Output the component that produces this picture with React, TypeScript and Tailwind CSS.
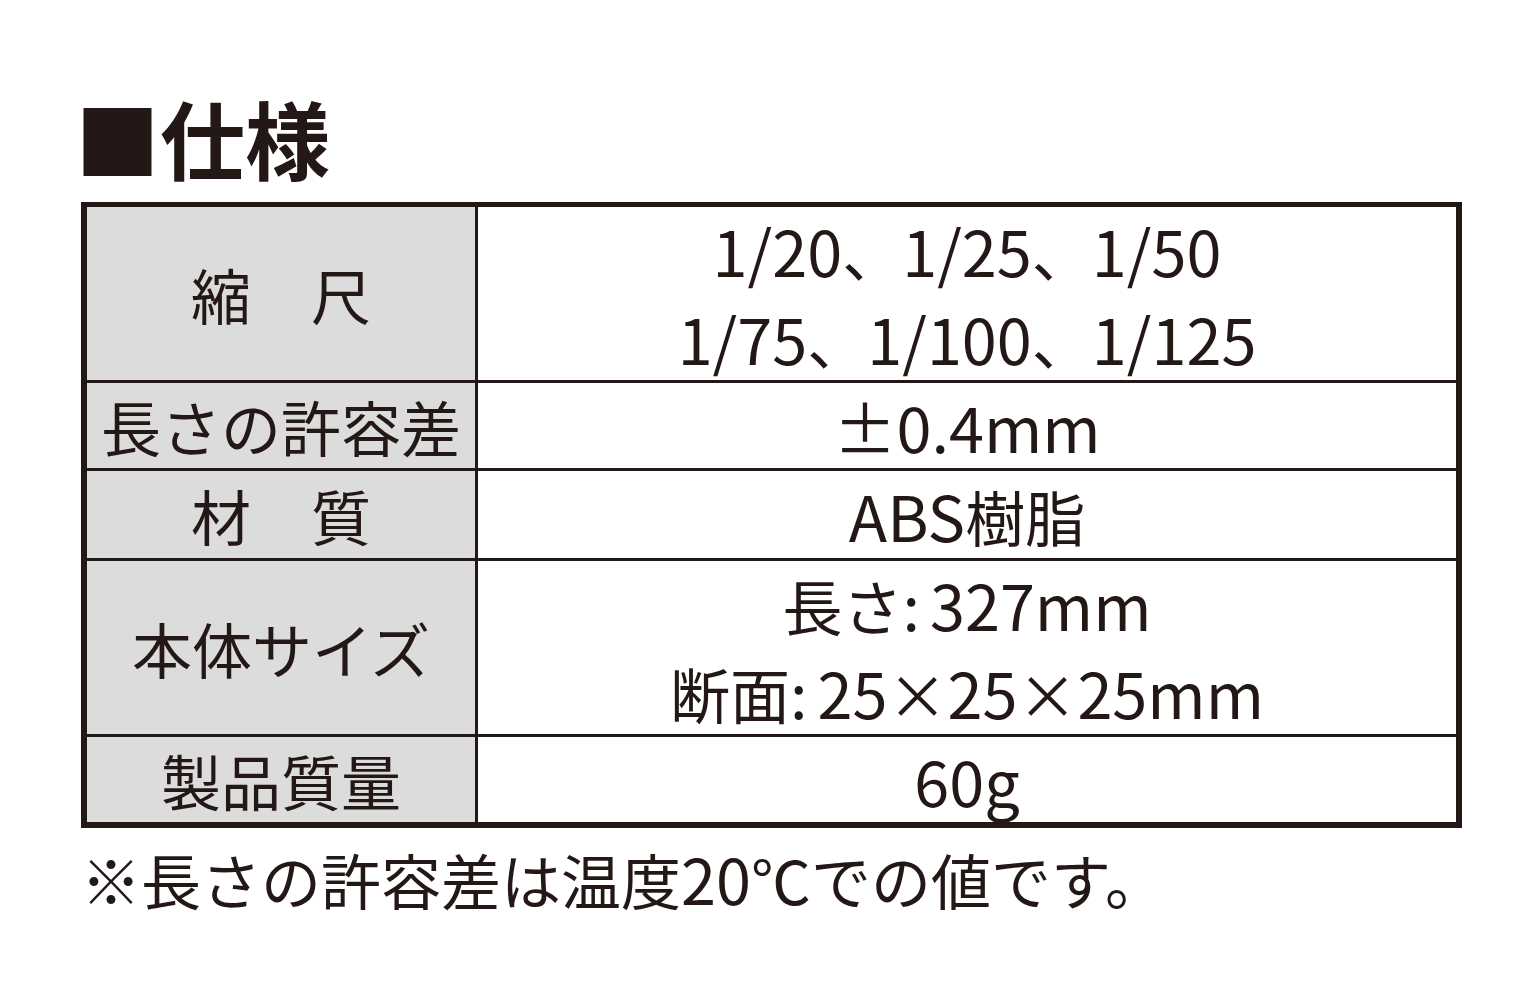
// 仕様表: 縮尺・許容差・材質・サイズ・質量の2列テーブルと注記。
import { Fragment } from 'react'

const rows: { label: string; values: string[]; h: string }[] = [
  { label: '縮　尺', values: ['1/20、1/25、1/50', '1/75、1/100、1/125'], h: 'h-[176px]' },
  { label: '長さの許容差', values: ['±0.4mm'], h: 'h-[88px]' },
  { label: '材　質', values: ['ABS樹脂'], h: 'h-[90px]' },
  { label: '本体サイズ', values: ['長さ:327mm', '断面:25×25×25mm'], h: 'h-[176px]' },
  { label: '製品質量', values: ['60g'], h: 'h-[85px]' },
]

// 英数字だけ少し大きく組む(元の版下は欧文が和文より一回り大きい)
function Mixed({ text }: { text: string }) {
  const parts = text.split(/([0-9A-Za-z/.±:]+)/)
  return (
    <>
      {parts.map((p, i) => {
        if (i % 2 === 0) return p
        // コロンは半角で、後ろを少し空ける
        const [head, ...rest] = p.split(':')
        return (
          <span key={i} className="text-[63px]">
            {rest.length ? (
              <>
                {head}
                <span className="mr-[10px]">:</span>
                {rest.join(':')}
              </>
            ) : (
              p
            )}
          </span>
        )
      })}
    </>
  )
}

export default function App() {
  return (
    <div
      className="min-h-[1000px] w-[1538px] bg-white pl-[81px] pt-[94px] text-[#231815]"
      style={{ fontFamily: '"Noto Sans CJK JP", "Noto Sans", sans-serif' }}
    >
      <h1 className="-ml-[6px] text-[85px] font-bold leading-none">■仕様</h1>

      <div className="mt-[23px] grid w-[1381px] grid-cols-[391px_1fr] border-[6px] border-t-[5px] border-[#231815]">
        {rows.map((r, i) => {
          const last = i === rows.length - 1
          return (
            <Fragment key={r.label}>
              <div
                className={`flex items-center justify-center border-r-[3px] border-[#231815] bg-[#dcdcdc] text-[60px] leading-none ${r.h} ${last ? '' : 'border-b-[3px]'}`}
              >
                {r.label}
              </div>
              <div
                className={`flex flex-col items-center justify-center border-[#231815] text-[60px] leading-[87px] ${r.h} ${last ? '' : 'border-b-[3px]'}`}
              >
                {r.values.map((v) => (
                  <div key={v} className="whitespace-nowrap">
                    <Mixed text={v} />
                  </div>
                ))}
              </div>
            </Fragment>
          )
        })}
      </div>

      <p className="mt-[18px] text-[60px] leading-none">
        <Mixed text="※長さの許容差は温度20℃での値です。" />
      </p>
    </div>
  )
}
